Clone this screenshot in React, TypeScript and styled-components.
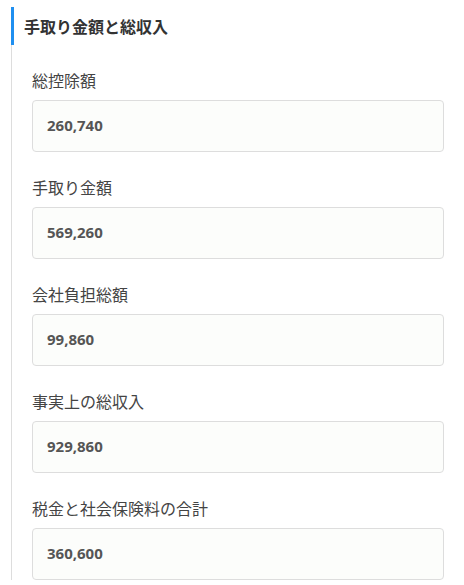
import React from "react";
import styled, { createGlobalStyle } from "styled-components";

const Global = createGlobalStyle`
  html, body { margin: 0; padding: 0; background: #fff; }
  body { font-family: "Noto Sans CJK JP", "Noto Sans", sans-serif; color: #333; }
`;

const Section = styled.section`
  padding: 7px 0 0 11px;
`;

const Heading = styled.h2`
  margin: 0;
  height: 38px;
  line-height: 38px;
  border-left: 3px solid #1f8ff0;
  padding-left: 10px;
  font-size: 16px;
  font-weight: 700;
  color: #333;
`;

const Body = styled.div`
  border-left: 1px solid #ddd;
  padding: 23px 20px 0 20px;
  display: flex;
  flex-direction: column;
  gap: 23px;
`;

const Field = styled.div`
  display: flex;
  flex-direction: column;
  gap: 8px;
`;

const Label = styled.label`
  font-size: 16px;
  line-height: 24px;
  color: #444;
`;

const Output = styled.div`
  box-sizing: border-box;
  height: 52px;
  border: 1px solid #ddd;
  border-radius: 4px;
  background: #fcfdfb;
  padding: 0 0 2px 14px;
  display: flex;
  align-items: center;
  font-family: "Open Sans", "Noto Sans", sans-serif;
  font-size: 15px;
  font-weight: 700;
  color: #555;
`;

const items = [
  { label: "総控除額", value: "260,740" },
  { label: "手取り金額", value: "569,260" },
  { label: "会社負担総額", value: "99,860" },
  { label: "事実上の総収入", value: "929,860" },
  { label: "税金と社会保険料の合計", value: "360,600" },
];

export default function App() {
  return (
    <>
      <Global />
      <Section>
        <Heading>手取り金額と総収入</Heading>
        <Body>
          {items.map((it) => (
            <Field key={it.label}>
              <Label>{it.label}</Label>
              <Output>{it.value}</Output>
            </Field>
          ))}
        </Body>
      </Section>
    </>
  );
}
